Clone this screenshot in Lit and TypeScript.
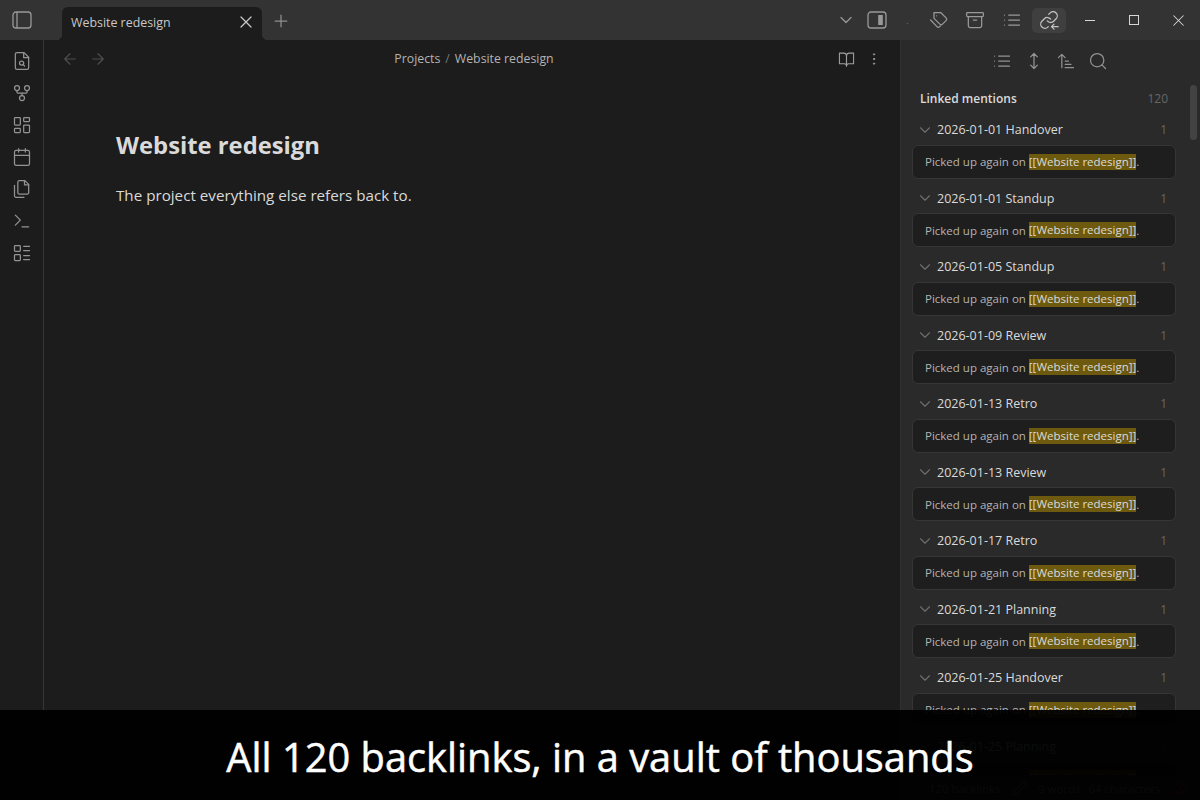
import { LitElement, html, css, svg } from "lit";
import { customElement } from "lit/decorators.js";

const icons: Record<string, unknown> = {
  sidebarLeft: svg`<rect x="3" y="4" width="18" height="16" rx="3"/><path d="M7 4.5v15"/>`,
  sidebarRight: svg`<rect x="3" y="4" width="18" height="16" rx="3"/><rect x="13.2" y="7" width="4.6" height="10" fill="currentColor" stroke="none"/>`,
  x: svg`<path d="M18 6 6 18M6 6l12 12"/>`,
  plus: svg`<path d="M5 12h14M12 5v14"/>`,
  chevron: svg`<path d="m6 9 6 6 6-6"/>`,
  tags: svg`<path d="M9 3H3v7l7 7c.9.9 2.3.9 3.2 0l4.3-4.3c.9-.9.9-2.3 0-3.2L11 3Z" transform="translate(3 0)"/><path d="M9 7.01V7"/><path d="m2 12 7.5 8c.9.9 2.3.9 3.2 0l1-1"/>`,
  archive: svg`<rect x="2" y="3" width="20" height="5" rx="1"/><path d="M4 8v11a2 2 0 0 0 2 2h12a2 2 0 0 0 2-2V8"/><path d="M10 12h4"/>`,
  list: svg`<path d="M8 6h13M8 12h13M8 18h13M3 6h.01M3 12h.01M3 18h.01"/>`,
  linksIn: svg`<path d="M10 13a5 5 0 0 0 7.54.54l3-3a5 5 0 0 0-7.07-7.07l-1.72 1.71"/><path d="M14 11a5 5 0 0 0-7.54-.54l-3 3a5 5 0 0 0 7.07 7.07l.5-.5"/><path d="M23 20h-8M18 17l-3 3 3 3"/>`,
  fileSearch: svg`<path d="M14.5 2H6a2 2 0 0 0-2 2v16a2 2 0 0 0 2 2h12a2 2 0 0 0 2-2V7.5L14.5 2z"/><path d="M14 2v6h6"/><circle cx="11.5" cy="14.5" r="2.5"/><path d="m13.25 16.25 1.75 1.75"/>`,
  graph: svg`<circle cx="12" cy="18" r="3"/><circle cx="6" cy="6" r="3"/><circle cx="18" cy="6" r="3"/><path d="M18 9v2c0 .6-.4 1-1 1H7c-.6 0-1-.4-1-1V9"/><path d="M12 12v3"/>`,
  dashboard: svg`<rect x="3" y="3" width="7" height="9" rx="1"/><rect x="14" y="3" width="7" height="5" rx="1"/><rect x="14" y="12" width="7" height="9" rx="1"/><rect x="3" y="16" width="7" height="5" rx="1"/>`,
  calendar: svg`<rect x="3" y="4" width="18" height="18" rx="2"/><path d="M16 2v4M8 2v4M3 10h18"/>`,
  files: svg`<path d="M15.5 2H8.6c-.4 0-.8.2-1.1.5-.3.3-.5.7-.5 1.1v12.8c0 .4.2.8.5 1.1.3.3.7.5 1.1.5h9.8c.4 0 .8-.2 1.1-.5.3-.3.5-.7.5-1.1V6.5L15.5 2z"/><path d="M3 7.6v12.8c0 .4.2.8.5 1.1.3.3.7.5 1.1.5h9.8"/><path d="M15 2v5h5"/>`,
  terminal: svg`<path d="m4 17 6-6-6-6"/><path d="M12 19h8"/>`,
  layoutList: svg`<rect x="3" y="3" width="7" height="7" rx="1"/><rect x="3" y="14" width="7" height="7" rx="1"/><path d="M14 4h7M14 9h7M14 15h7M14 20h7"/>`,
  arrowLeft: svg`<path d="m12 19-7-7 7-7M19 12H5"/>`,
  arrowRight: svg`<path d="M5 12h14M12 5l7 7-7 7"/>`,
  book: svg`<path d="M2 3h6a4 4 0 0 1 4 4v14a3 3 0 0 0-3-3H2z"/><path d="M22 3h-6a4 4 0 0 0-4 4v14a3 3 0 0 1 3-3h7z"/>`,
  more: svg`<circle cx="12" cy="5" r="1"/><circle cx="12" cy="12" r="1"/><circle cx="12" cy="19" r="1"/>`,
  expand: svg`<path d="M12 3v18M8 7l4-4 4 4M8 17l4 4 4-4"/>`,
  sort: svg`<path d="m3 8 4-4 4 4M7 4v16M11 12h4M11 16h7M11 20h10"/>`,
  search: svg`<circle cx="11" cy="11" r="8"/><path d="m21 21-4.3-4.3"/>`,
  pencil: svg`<path d="M17 3a2.85 2.83 0 1 1 4 4L7.5 20.5 2 22l1.5-5.5Z"/>`,
  syncOff: svg`<path d="M3 3l18 18M21 8V3h-5M3 16v5h5M20 12a8 8 0 0 0-14-5M4 12a8 8 0 0 0 14 5"/>`,
};

const icon = (name: string, size = 20, sw = 1.5) => html`<svg
  width=${size}
  height=${size}
  viewBox="0 0 24 24"
  fill="none"
  stroke="currentColor"
  stroke-width=${sw}
  stroke-linecap="round"
  stroke-linejoin="round"
>${icons[name]}</svg>`;

const mentions = [
  "2026-01-01 Handover",
  "2026-01-01 Standup",
  "2026-01-05 Standup",
  "2026-01-09 Review",
  "2026-01-13 Retro",
  "2026-01-13 Review",
  "2026-01-17 Retro",
  "2026-01-21 Planning",
  "2026-01-25 Handover",
  "2026-01-25 Planning",
];

const ribbon = ["fileSearch", "graph", "dashboard", "calendar", "files", "terminal", "layoutList"];

@customElement("app-root")
export class AppRoot extends LitElement {
  static styles = css`
    :host {
      display: block;
      position: relative;
      width: 1200px;
      height: 800px;
      overflow: hidden;
      background: #1c1c1c;
      color: #dadada;
      font-family: "Open Sans", "Noto Sans", sans-serif;
    }
    svg {
      display: block;
    }

    .titlebar {
      height: 40px;
      display: flex;
      background: #333333;
      color: #999999;
    }
    .toggle {
      width: 44px;
      display: flex;
      align-items: center;
      justify-content: center;
    }
    .tab {
      position: relative;
      width: 200px;
      height: 33px;
      margin: 7px 0 0 18px;
      padding: 0 6px 3px 9px;
      box-sizing: border-box;
      display: flex;
      align-items: center;
      justify-content: space-between;
      background: #1c1c1c;
      border-radius: 6px 6px 0 0;
      font-size: 12.4px;
      color: #c8c8c8;
    }
    .tab::before,
    .tab::after {
      content: "";
      position: absolute;
      bottom: 0;
      width: 6px;
      height: 6px;
    }
    .tab::before {
      left: -6px;
      background: radial-gradient(circle at 0 0, transparent 6px, #1c1c1c 6.5px);
    }
    .tab::after {
      right: -6px;
      background: radial-gradient(circle at 100% 0, transparent 6px, #1c1c1c 6.5px);
    }
    .new-tab {
      width: 38px;
      display: flex;
      align-items: center;
      justify-content: center;
      margin-top: 2px;
      color: #8f8f8f;
    }
    .actions {
      margin-left: auto;
      display: flex;
      align-items: center;
    }
    .slot {
      width: 34px;
      height: 25px;
      margin-right: 3px;
      display: flex;
      align-items: center;
      justify-content: center;
      border-radius: 5px;
    }
    .slot.tight {
      width: 30px;
      margin-right: 1px;
    }
    .slot.dot {
      width: 29px;
      margin-right: 0;
      font-size: 9px;
      color: #777;
    }
    .slot.tag {
      margin-right: 2px;
    }
    .slot.on {
      margin-right: 2px;
      background: #3f3f3f;
      color: #c4c4c4;
    }
    .win {
      width: 44px;
      height: 40px;
      display: flex;
      align-items: center;
      justify-content: center;
      color: #d6d6d6;
    }
    .win .min {
      width: 10px;
      height: 1px;
      background: currentColor;
    }
    .win .max {
      width: 8px;
      height: 8px;
      border: 1px solid currentColor;
    }

    .body {
      display: flex;
      height: 760px;
    }
    .ribbon {
      width: 44px;
      box-sizing: border-box;
      border-right: 1px solid #363636;
      padding-top: 5px;
      display: flex;
      flex-direction: column;
      align-items: center;
      color: #939393;
    }
    .ribbon div {
      height: 32px;
      display: flex;
      align-items: center;
    }

    .main {
      flex: 1;
      min-width: 0;
    }
    .view-header {
      height: 38px;
      display: flex;
      align-items: center;
      padding: 0 18px 0 17px;
      color: #a0a0a0;
    }
    .nav {
      display: flex;
      gap: 10px;
      color: #4f4f4f;
    }
    .crumbs {
      flex: 1;
      display: flex;
      justify-content: center;
      gap: 5px;
      font-size: 12.3px;
      color: #b3b3b3;
      padding: 0 0 2px 3px;
    }
    .crumbs .sep {
      color: #777;
    }
    .view-actions {
      display: flex;
      align-items: center;
      gap: 11px;
    }
    .content {
      padding: 48px 0 0 72px;
    }
    h1 {
      margin: 0;
      font-size: 23.8px;
      line-height: 38px;
      font-weight: 700;
      color: #dadada;
    }
    .content p {
      margin: 19px 0 0;
      font-size: 15.2px;
      line-height: 24px;
      color: #dadada;
    }

    .side {
      position: relative;
      width: 300px;
      box-sizing: border-box;
      border-left: 1px solid #303030;
      background: #2a2a2a;
      overflow: hidden;
    }
    .side-tools {
      height: 42px;
      display: flex;
      align-items: center;
      justify-content: center;
      gap: 12px;
      padding-right: 1px;
      color: #939393;
    }
    .pane {
      padding: 3px 24px 0 11px;
    }
    .pane-title {
      height: 27px;
      display: flex;
      align-items: center;
      justify-content: space-between;
      padding: 0 8px;
      font-size: 12px;
      font-weight: 600;
      color: #dadada;
    }
    .pane-title span:last-child {
      font-weight: 400;
      color: #666;
    }
    .file {
      height: 32.5px;
      box-sizing: border-box;
      padding: 3px 9px 0 4px;
      display: flex;
      align-items: center;
      font-size: 12.5px;
      color: #dadada;
    }
    .file svg {
      color: #6e6e6e;
      margin-right: 3px;
    }
    .file .name {
      flex: 1;
    }
    .file .count {
      color: #666;
      font-size: 12px;
    }
    .match {
      height: 34px;
      box-sizing: border-box;
      margin-bottom: 2px;
      padding: 0 12px;
      display: flex;
      align-items: center;
      background: #1e1e1e;
      border: 1px solid #363636;
      border-radius: 6px;
      font-size: 11.5px;
      color: #b3b3b3;
      white-space: pre;
    }
    mark {
      display: inline-block;
      background: #6e5a0e;
      color: #dadada;
      line-height: 16px;
    }
    .thumb {
      position: absolute;
      top: 45px;
      right: 3px;
      width: 7px;
      height: 55px;
      border-radius: 4px;
      background: #434343;
    }

    .status {
      position: absolute;
      right: 0;
      bottom: 0;
      width: 288px;
      height: 25px;
      box-sizing: border-box;
      padding: 0 12px 0 16px;
      display: flex;
      align-items: center;
      background: #2a2a2a;
      border-top: 1px solid #363636;
      border-left: 1px solid #363636;
      border-radius: 8px 0 0 0;
      font-size: 11.4px;
      color: #a3a3a3;
    }
    .status .pen {
      margin: 0 11px 0 12px;
    }
    .status .words {
      margin-right: 8px;
    }
    .status .off {
      margin-left: auto;
      color: #e93147;
    }

    .caption {
      position: absolute;
      left: 0;
      right: 0;
      bottom: 0;
      height: 90px;
      box-sizing: border-box;
      padding-top: 3px;
      display: flex;
      align-items: center;
      justify-content: center;
      background: rgba(0, 0, 0, 0.95);
      color: #ffffff;
      font-size: 39.8px;
      font-weight: 500;
      -webkit-text-stroke: 0.5px #ffffff;
    }
  `;

  render() {
    return html`
      <div class="titlebar">
        <div class="toggle">${icon("sidebarLeft", 24, 1.3)}</div>
        <div class="tab">
          <span>Website redesign</span>
          ${icon("x", 20, 1.5)}
        </div>
        <div class="new-tab">${icon("plus")}</div>
        <div class="actions">
          <div class="slot tight">${icon("chevron")}</div>
          <div class="slot tight">${icon("sidebarRight", 24, 1.3)}</div>
          <div class="slot dot">.</div>
          <div class="slot tag">${icon("tags")}</div>
          <div class="slot">${icon("archive")}</div>
          <div class="slot">${icon("list")}</div>
          <div class="slot on">${icon("linksIn")}</div>
          <div class="win"><div class="min"></div></div>
          <div class="win"><div class="max"></div></div>
          <div class="win">${icon("x", 19, 1.3)}</div>
        </div>
      </div>

      <div class="body">
        <div class="ribbon">
          ${ribbon.map((name) => html`<div>${icon(name)}</div>`)}
        </div>

        <div class="main">
          <div class="view-header">
            <div class="nav">${icon("arrowLeft", 18)}${icon("arrowRight", 18)}</div>
            <div class="crumbs">
              <span>Projects</span><span class="sep">/</span><span>Website redesign</span>
            </div>
            <div class="view-actions">${icon("book", 17)}${icon("more", 16)}</div>
          </div>
          <div class="content">
            <h1>Website redesign</h1>
            <p>The project everything else refers back to.</p>
          </div>
        </div>

        <div class="side">
          <div class="side-tools">
            ${icon("list")}${icon("expand")}${icon("sort")}${icon("search")}
          </div>
          <div class="pane">
            <div class="pane-title"><span>Linked mentions</span><span>120</span></div>
            ${mentions.map(
              (name) => html`
                <div class="file">
                  ${icon("chevron", 18)}
                  <span class="name">${name}</span>
                  <span class="count">1</span>
                </div>
                <div class="match">Picked up again on <mark>[[Website redesign]]</mark>.</div>
              `
            )}
          </div>
          <div class="thumb"></div>
        </div>
      </div>

      <div class="status">
        <span>120 backlinks</span>
        <span class="pen">${icon("pencil", 15)}</span>
        <span class="words">9 words</span>
        <span>64 characters</span>
        <span class="off">${icon("syncOff", 15)}</span>
      </div>

      <div class="caption">All 120 backlinks, in a vault of thousands</div>
    `;
  }
}
